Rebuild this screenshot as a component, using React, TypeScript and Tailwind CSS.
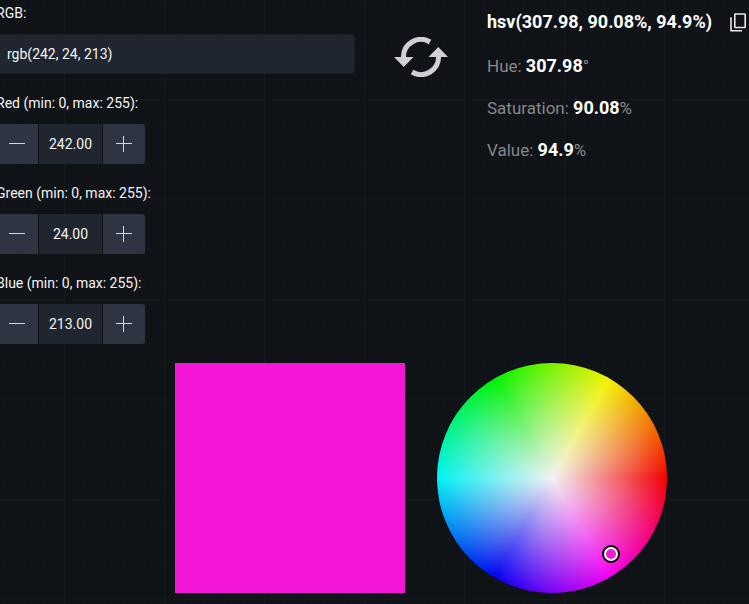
import { useState } from "react";

const channels = [
    { id: "red", label: "Red", initial: 242 },
    { id: "green", label: "Green", initial: 24 },
    { id: "blue", label: "Blue", initial: 213 },
];

const results = [
    { label: "Hue", value: "307.98", unit: "°" },
    { label: "Saturation", value: "90.08", unit: "%" },
    { label: "Value", value: "94.9", unit: "%" },
];

function SwapIcon() {
    return (
        <svg width="54" height="40" viewBox="0 0 54 40" fill="none" aria-hidden="true">
            <path d="M36 5A17.5 17.5 0 0 0 9.5 21" stroke="#d0d0d0" strokeWidth="5" />
            <path d="M0 20H19.5L9.75 30Z" fill="#d0d0d0" />
            <path d="M18 35A17.5 17.5 0 0 0 44.5 19" stroke="#d0d0d0" strokeWidth="5" />
            <path d="M54 20H34.5L44.25 10Z" fill="#d0d0d0" />
        </svg>
    );
}

function CopyIcon() {
    return (
        <svg width="16" height="19" viewBox="0 0 16 19" fill="none" stroke="#e8e8e8" strokeWidth="1.6" aria-hidden="true">
            <rect x="4.8" y="1" width="10.4" height="13.5" rx="0.6" />
            <path d="M1 4.2V17.8H12" />
        </svg>
    );
}

type NumberFieldProps = {
    id: string;
    label: string;
    value: number;
    onChange: (value: number) => void;
};

function NumberField({ id, label, value, onChange }: NumberFieldProps) {
    const set = (next: number) => onChange(Math.min(255, Math.max(0, next || 0)));

    return (
        <div>
            <label htmlFor={id} className="mb-2.5 block text-sm leading-[22px]">
                {label} (min: 0, max: 255):
            </label>
            <div className="flex h-10 w-[149px] gap-px overflow-hidden rounded-[3px]">
                <button
                    type="button"
                    aria-label={`Decrease ${label}`}
                    onClick={() => set(value - 1)}
                    className="flex w-[42px] items-center justify-center bg-[#2e3442]"
                >
                    <svg width="16" height="16" viewBox="0 0 16 16" stroke="#d4d6da" aria-hidden="true">
                        <path d="M0 7.5H16" />
                    </svg>
                </button>
                <input
                    id={id}
                    type="text"
                    value={value.toFixed(2)}
                    onChange={(e) => set(parseFloat(e.target.value))}
                    className="min-w-0 flex-1 bg-[#1f262f] text-center text-sm outline-none"
                />
                <button
                    type="button"
                    aria-label={`Increase ${label}`}
                    onClick={() => set(value + 1)}
                    className="flex w-[42px] items-center justify-center bg-[#2e3442]"
                >
                    <svg width="16" height="16" viewBox="0 0 16 16" stroke="#d4d6da" aria-hidden="true">
                        <path d="M0 7.5H16M7.5 0V16" />
                    </svg>
                </button>
            </div>
        </div>
    );
}

export default function App() {
    const [rgb, setRgb] = useState(channels.map((c) => c.initial));
    const color = `rgb(${rgb.join(", ")})`;

    const updateChannel = (index: number, value: number) => {
        setRgb(rgb.map((v, i) => (i === index ? value : v)));
    };

    const parseColor = (text: string) => {
        const parts = text.match(/\d+/g);
        if (parts && parts.length === 3) setRgb(parts.map((p) => Math.min(255, Number(p))));
    };

    return (
        <div className="min-h-screen overflow-hidden bg-[#0f1216] bg-[linear-gradient(to_right,#16191b_1px,transparent_1px),linear-gradient(to_bottom,#16191b_1px,transparent_1px),linear-gradient(to_right,#121417_1px,transparent_1px),linear-gradient(to_bottom,#121417_1px,transparent_1px)] bg-[size:100px_100px,100px_100px,10px_10px,10px_10px] bg-[position:64px_99px,64px_99px,4px_9px,4px_9px] font-[Roboto,sans-serif] text-[#f4f4f4]">
            <main className="-ml-1 -mr-[97px] pt-0.5">
                <div className="grid grid-cols-[1fr_132px_1fr]">
                    {/* Source color */}
                    <form className="flex flex-col gap-[18px]" onSubmit={(e) => e.preventDefault()}>
                        <div>
                            <label htmlFor="rgb" className="mb-2.5 block text-sm leading-[22px]">
                                RGB:
                            </label>
                            <input
                                id="rgb"
                                type="text"
                                value={color}
                                onChange={(e) => parseColor(e.target.value)}
                                className="h-10 w-full rounded-[3px] border border-[#1b2028] bg-[#1f262f] px-2.5 text-sm outline-none"
                            />
                        </div>
                        {channels.map((c, i) => (
                            <NumberField
                                key={c.id}
                                id={c.id}
                                label={c.label}
                                value={rgb[i]}
                                onChange={(value) => updateChannel(i, value)}
                            />
                        ))}
                    </form>

                    <button type="button" aria-label="Swap" className="mt-[35px] self-start justify-self-center">
                        <SwapIcon />
                    </button>

                    {/* Converted color */}
                    <section className="text-[17px] leading-[42px]">
                        <div className="mb-[3px] flex h-10 items-center gap-[18px]">
                            <strong className="text-lg font-bold text-white">hsv(307.98, 90.08%, 94.9%)</strong>
                            <button type="button" aria-label="Copy">
                                <CopyIcon />
                            </button>
                        </div>
                        {results.map((r) => (
                            <p key={r.label} className="h-[42px] text-[#85888c]">
                                {r.label}: <b className="text-lg leading-none font-bold text-white">{r.value}</b>
                                {r.unit}
                            </p>
                        ))}
                    </section>
                </div>

                <div className="mt-[19px] flex justify-center gap-8 pb-[11px]">
                    <div className="size-[230px]" style={{ backgroundColor: color }} />
                    {/* Hue runs counterclockwise from the right, saturation outward from the center */}
                    <div className="relative size-[230px] rounded-full bg-[radial-gradient(closest-side,#f2f2f2,#f2f2f200),conic-gradient(from_90deg,#f20000,#f200f2,#0000f2,#00f2f2,#00f200,#f2f200,#f20000)]">
                        <span
                            className="absolute top-[184px] left-[167px] size-3.5 rounded-full border-2 border-white ring-2 ring-black"
                            style={{ backgroundColor: color }}
                        />
                    </div>
                </div>
            </main>
        </div>
    );
}
